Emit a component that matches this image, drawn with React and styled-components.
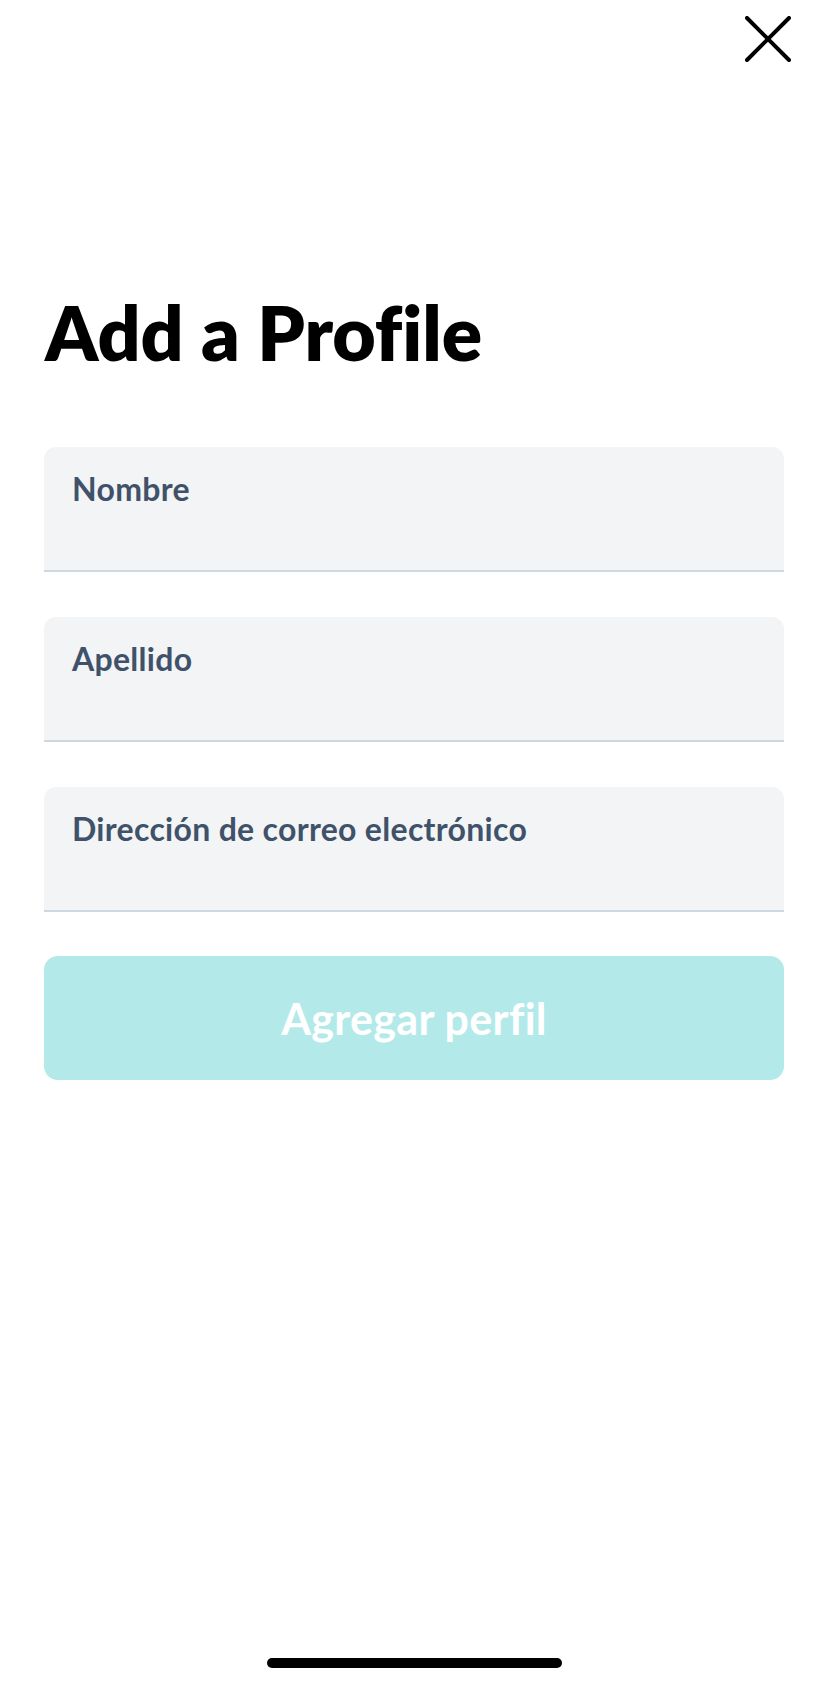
import React, { useState } from 'react';
import styled, { createGlobalStyle } from 'styled-components';

const GlobalStyle = createGlobalStyle`
  html, body {
    margin: 0;
    padding: 0;
    background: #ffffff;
  }
  * {
    box-sizing: border-box;
  }
`

const Screen = styled.div`
  width: 828px;
  min-height: 1687px;
  display: flex;
  flex-direction: column;
  background: #ffffff;
  font-family: "Lato", "Noto Sans", sans-serif;
  font-variant-ligatures: none;
`

const TopBar = styled.div`
  display: flex;
  justify-content: flex-end;
  padding: 16px 37px 16px 0;
`

const CloseButton = styled.button`
  width: 46px;
  height: 46px;
  padding: 0;
  border: none;
  background: none;
  cursor: pointer;
  display: flex;
`

const Form = styled.div`
  display: flex;
  flex-direction: column;
  padding: 0 44px;
`

const Title = styled.h1`
  margin: 217px 0 77px 1px;
  font-size: 75px;
  line-height: 1;
  font-weight: 800;
  color: #000000;
`

const Field = styled.label`
  display: block;
  height: 125px;
  margin-bottom: 45px;
  padding: 26px 28px 0;
  background: #f3f4f6;
  border-radius: 12px 12px 0 0;
  border-bottom: 2px solid #cdd8e1;
  cursor: text;
`

const FieldLabel = styled.span`
  display: block;
  font-size: 32px;
  line-height: 1;
  font-weight: 700;
  letter-spacing: 0.3px;
  color: #3f5269;
`

const FieldInput = styled.input`
  display: block;
  width: 100%;
  margin-top: 12px;
  border: none;
  outline: none;
  background: transparent;
  font-family: inherit;
  font-size: 30px;
  color: #1f2d3d;
`

const SubmitButton = styled.button`
  height: 124px;
  margin-top: -1px;
  border: none;
  border-radius: 14px;
  background: #b3eae9;
  color: #ffffff;
  font-family: inherit;
  font-variant-ligatures: none;
  font-size: 43px;
  font-weight: 700;
  letter-spacing: 0.3px;
  cursor: ${(props) => (props.disabled ? "default" : "pointer")};
`

const HomeIndicator = styled.div`
  width: 295px;
  height: 10px;
  margin: auto auto 19px;
  border-radius: 5px;
  background: #000000;
`

const fields = [
  { key: "firstName", label: "Nombre" },
  { key: "lastName", label: "Apellido" },
  { key: "email", label: "Dirección de correo electrónico" },
]

export default function App() {
  const [values, setValues] = useState({ firstName: "", lastName: "", email: "" });
  const ready = values.firstName && values.lastName && values.email;

  return (
    <>
      <GlobalStyle />
      <Screen>
        <TopBar>
          <CloseButton aria-label="Cerrar">
            <svg width="46" height="46" viewBox="0 0 46 46" fill="none">
              <path d="M2 2 L44 44 M44 2 L2 44" stroke="#000" strokeWidth="4" strokeLinecap="round" />
            </svg>
          </CloseButton>
        </TopBar>
        <Form>
          <Title>Add a Profile</Title>
          {fields.map((f) => (
            <Field key={f.key}>
              <FieldLabel>{f.label}</FieldLabel>
              <FieldInput
                value={values[f.key]}
                onChange={(e) => setValues({ ...values, [f.key]: e.target.value })}
              />
            </Field>
          ))}
          <SubmitButton disabled={!ready}>Agregar perfil</SubmitButton>
        </Form>
        <HomeIndicator />
      </Screen>
    </>
  );
}
